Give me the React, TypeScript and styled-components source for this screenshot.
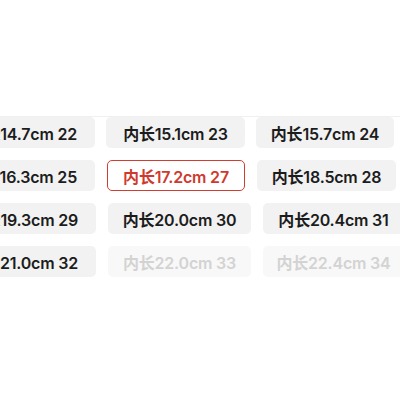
import React from 'react'
import styled, { createGlobalStyle } from 'styled-components'

const GlobalStyle = createGlobalStyle`
  html, body {
    margin: 0;
    padding: 0;
    background: #ffffff;
    overflow: hidden;
  }
  body {
    font-family: Inter, 'Noto Sans CJK SC', 'Liberation Sans', sans-serif;
  }
`

const Page = styled.div`
  width: 400px;
  height: 400px;
  overflow: hidden;
  padding-top: 116px;
  box-sizing: border-box;
`

const List = styled.div`
  border-top: 1px solid #f0f0f0;
  display: flex;
  flex-direction: column;
  gap: 12px;
`

const Row = styled.div<{ $gap: number; $offset: number }>`
  display: flex;
  flex-direction: row;
  gap: ${p => p.$gap}px;
  margin-left: ${p => p.$offset}px;
  white-space: nowrap;
`

type State = 'normal' | 'active' | 'disabled'

const SizeChip = styled.div<{ $w: number; $state: State; $first?: boolean }>`
  flex: 0 0 auto;
  width: ${p => p.$w}px;
  height: 31px;
  box-sizing: border-box;
  border-radius: 5px;
  display: flex;
  align-items: center;
  justify-content: ${p => (p.$first ? 'flex-end' : 'center')};
  padding-right: ${p => (p.$first ? 17 : 0)}px;
  font-size: 16px;
  font-weight: 600;
  letter-spacing: -0.2px;
  background: ${p =>
    p.$state === 'active' ? '#ffffff' : p.$state === 'disabled' ? '#f8f8f8' : '#f2f2f2'};
  border: 1px solid ${p => (p.$state === 'active' ? '#d03e32' : 'transparent')};
  color: ${p =>
    p.$state === 'active' ? '#cf3a2e' : p.$state === 'disabled' ? '#d3d3d3' : '#1c1c1c'};
`

type Item = { label: string; w: number; state?: State }

const rows: { gap: number; offset: number; items: Item[] }[] = [
  {
    gap: 11,
    offset: -17,
    items: [
      { label: '内长14.7cm 22', w: 112 },
      { label: '内长15.1cm 23', w: 139 },
      { label: '内长15.7cm 24', w: 138 },
    ],
  },
  {
    gap: 12,
    offset: -17,
    items: [
      { label: '内长16.3cm 25', w: 112 },
      { label: '内长17.2cm 27', w: 138, state: 'active' },
      { label: '内长18.5cm 28', w: 139 },
    ],
  },
  {
    gap: 12,
    offset: -16,
    items: [
      { label: '内长19.3cm 29', w: 112 },
      { label: '内长20.0cm 30', w: 143 },
      { label: '内长20.4cm 31', w: 141 },
    ],
  },
  {
    gap: 12,
    offset: -16,
    items: [
      { label: '内长21.0cm 32', w: 112 },
      { label: '内长22.0cm 33', w: 143, state: 'disabled' },
      { label: '内长22.4cm 34', w: 141, state: 'disabled' },
    ],
  },
]

export default function App() {
  return (
    <>
      <GlobalStyle />
      <Page>
        <List>
          {rows.map((row, i) => (
            <Row key={i} $gap={row.gap} $offset={row.offset}>
              {row.items.map((item, j) => (
                <SizeChip key={j} $w={item.w} $state={item.state || 'normal'} $first={j === 0}>
                  {item.label}
                </SizeChip>
              ))}
            </Row>
          ))}
        </List>
      </Page>
    </>
  )
}
